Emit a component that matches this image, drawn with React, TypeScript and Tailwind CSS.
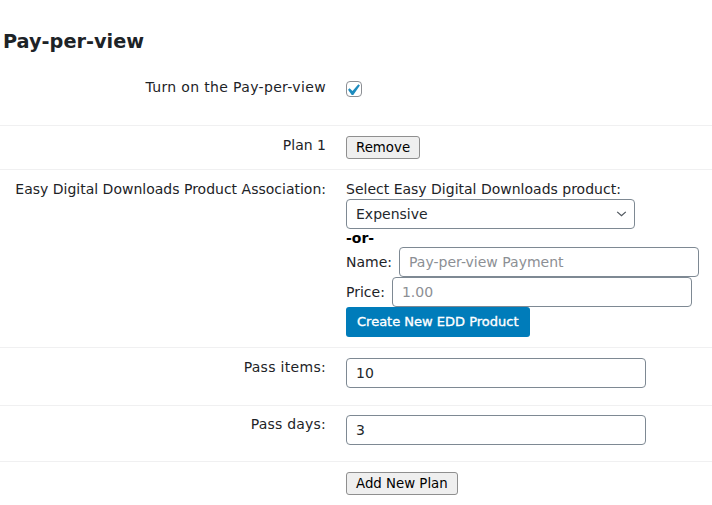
import type { ReactNode } from "react";

function Row({
  label,
  children,
  className = "",
  labelClass = "",
  fieldClass = "",
}: {
  label?: ReactNode;
  children: ReactNode;
  className?: string;
  labelClass?: string;
  fieldClass?: string;
}) {
  return (
    <div className={`flex ${className}`}>
      <div className={`w-[336px] shrink-0 pr-[10px] text-right leading-[19px] ${labelClass}`}>{label}</div>
      <div className={`pl-[10px] ${fieldClass}`}>{children}</div>
    </div>
  );
}

function TextInput({ value, placeholder, width = "w-[300px]" }: { value?: string; placeholder?: string; width?: string }) {
  return (
    <input
      readOnly
      defaultValue={value}
      placeholder={placeholder}
      className={`${width} h-[30px] rounded-[4px] border border-[#7e8993] bg-white px-[9px] text-[14px] text-[#23282d] placeholder:text-[#8c8f94] outline-none`}
    />
  );
}

function PlainButton({ children }: { children: ReactNode }) {
  return (
    <button className="h-[23px] rounded-[3px] border border-[#8f8f8f] bg-[#efefef] px-[9px] text-[13.33px] leading-[20px] text-black">
      {children}
    </button>
  );
}

export default function App() {
  return (
    <div className="min-h-[505px] w-[712px] bg-white font-['DejaVu_Sans',sans-serif] text-[14px] text-[#1d2327]">
      <div className="pl-[3px] pt-[30px]">
        <h2 className="text-[19.3px] font-bold leading-[24px] text-[#1d2327]">Pay-per-view</h2>
      </div>

      {/* turn on */}
      <Row
        label={<span className="tracking-[0.35px]">Turn on the Pay-per-view</span>}
        className="h-[71px]"
        labelClass="pt-[24px]"
        fieldClass="pt-[27px]"
      >
        <span className="relative block h-[16px] w-[16px] rounded-[4px] border border-[#8c8f94] bg-white">
          <svg viewBox="4 2 14 14" className="absolute -left-px -top-px h-[16px] w-[16px]">
            <path fill="#1e8cbe" d="M14.83 4.89l1.34.94-5.81 8.38H9.02L5.78 9.67l1.34-1.25 2.57 2.4z" />
          </svg>
        </span>
      </Row>

      {/* plan */}
      <Row label="Plan 1" className="border-t border-[#f0f0f1] pb-[10px]" labelClass="pt-[10px]" fieldClass="pt-[10px]">
        <PlainButton>Remove</PlainButton>
      </Row>

      {/* edd product */}
      <Row
        label="Easy Digital Downloads Product Association:"
        className="border-t border-[#f0f0f1] pb-[10px]"
        labelClass="pt-[10px]"
        fieldClass="pt-[10px]"
      >
        <div className="leading-[19px]">Select Easy Digital Downloads product:</div>
        <div className="relative h-[30px] w-[289px]">
          <select className="h-[30px] w-full appearance-none rounded-[4px] border border-[#7e8993] bg-white pl-[9px] text-[14px] text-[#23282d] outline-none">
            <option>Expensive</option>
          </select>
          <svg viewBox="0 0 12 7" className="pointer-events-none absolute right-[8px] top-[12px] h-[6px] w-[11px]">
            <path d="M1 1l5 4.5L11 1" fill="none" stroke="#50575e" strokeWidth="1.5" />
          </svg>
        </div>
        <div className="h-[18px] font-bold leading-[18px] text-black">-or-</div>
        <div className="flex items-center gap-[7px]">
          <span>Name:</span>
          <TextInput placeholder="Pay-per-view Payment" />
        </div>
        <div className="flex items-center gap-[7px]">
          <span>Price:</span>
          <TextInput placeholder="1.00" />
        </div>
        <button className="h-[30px] rounded-[3px] bg-[#007cba] px-[11px] text-[13px] text-white [-webkit-text-stroke:0.35px_white]">
          Create New EDD Product
        </button>
      </Row>

      {/* pass items */}
      <Row
        label={<span className="tracking-[0.3px]">Pass items:</span>}
        className="border-t border-[#f0f0f1] pb-[17px]"
        labelClass="pt-[10px]"
        fieldClass="pt-[10px]"
      >
        <TextInput value="10" />
      </Row>

      {/* pass days */}
      <Row
        label={<span className="tracking-[0.2px]">Pass days:</span>}
        className="border-t border-[#f0f0f1] pb-[16px]"
        labelClass="pt-[9px]"
        fieldClass="pt-[9px]"
      >
        <TextInput value="3" />
      </Row>

      <Row className="border-t border-[#f0f0f1]" fieldClass="pt-[10px]">
        <PlainButton>Add New Plan</PlainButton>
      </Row>
    </div>
  );
}
